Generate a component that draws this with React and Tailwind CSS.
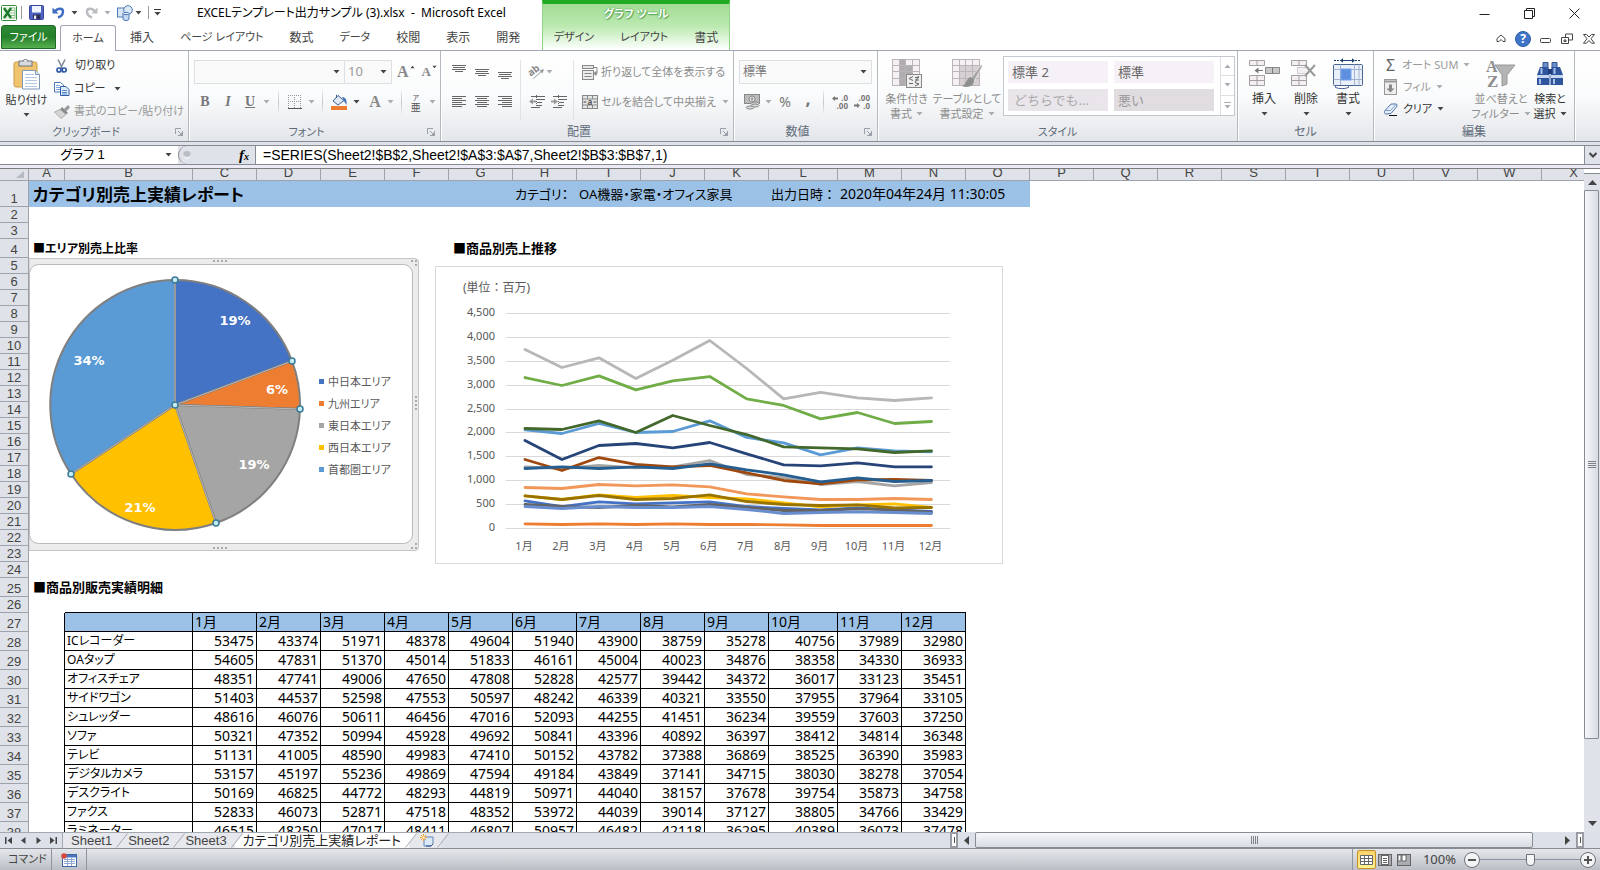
import React from "react";
import clsx from "clsx";

const MONTHS = ["1月", "2月", "3月", "4月", "5月", "6月", "7月", "8月", "9月", "10月", "11月", "12月"];

const COLUMNS = "ABCDEFGHIJKLMNOPQRSTUVWX".split("");

const PRODUCTS = [
    ["ICレコーダー", 53475, 43374, 51971, 48378, 49604, 51940, 43900, 38759, 35278, 40756, 37989, 32980],
    ["OAタップ", 54605, 47831, 51370, 45014, 51833, 46161, 45004, 40023, 34876, 38358, 34330, 36933],
    ["オフィスチェア", 48351, 47741, 49006, 47650, 47808, 52828, 42577, 39442, 34372, 36017, 33123, 35451],
    ["サイドワゴン", 51403, 44537, 52598, 47553, 50597, 48242, 46339, 40321, 33550, 37955, 37964, 33105],
    ["シュレッダー", 48616, 46076, 50611, 46456, 47016, 52093, 44255, 41451, 36234, 39559, 37603, 37250],
    ["ソファ", 50321, 47352, 50994, 45928, 49692, 50841, 43396, 40892, 36397, 38412, 34814, 36348],
    ["テレビ", 51131, 41005, 48590, 49983, 47410, 50152, 43782, 37388, 36869, 38525, 36390, 35983],
    ["デジタルカメラ", 53157, 45197, 55236, 49869, 47594, 49184, 43849, 37141, 34715, 38030, 38278, 37054],
    ["デスクライト", 50169, 46825, 44772, 48293, 44819, 50971, 44040, 38157, 37678, 39754, 35873, 34758],
    ["ファクス", 52833, 46073, 52871, 47518, 48352, 53972, 44039, 39014, 37127, 38805, 34766, 33429],
    ["ラミネーター", 46515, 48250, 47017, 48411, 46807, 50957, 46482, 42118, 36295, 40389, 36073, 37478]
];

const SERIES = [
    { color: "#4472c4", data: [579, 460, 558, 516, 537, 558, 460, 419, 391, 433, 391, 356] },
    { color: "#ed7d31", data: [98, 84, 98, 84, 98, 84, 84, 77, 63, 63, 63, 63] },
    { color: "#a5a5a5", data: [1291, 1256, 1319, 1270, 1291, 1423, 1130, 1067, 921, 984, 893, 963] },
    { color: "#ffc000", data: [684, 607, 705, 649, 691, 649, 621, 537, 454, 495, 516, 440] },
    { color: "#5b9bd5", data: [2065, 1988, 2198, 2009, 2030, 2254, 1905, 1793, 1542, 1688, 1626, 1605] },
    { color: "#70ad47", data: [3160, 2993, 3195, 2902, 3091, 3181, 2714, 2575, 2295, 2428, 2198, 2240] },
    { color: "#264478", data: [1842, 1444, 1737, 1779, 1688, 1800, 1563, 1333, 1312, 1374, 1291, 1291] },
    { color: "#9e480e", data: [1444, 1214, 1486, 1340, 1291, 1319, 1165, 1005, 935, 1019, 1026, 1005] },
    { color: "#636363", data: [502, 460, 440, 481, 454, 502, 440, 377, 377, 412, 391, 335] },
    { color: "#997300", data: [684, 607, 691, 607, 628, 705, 565, 502, 481, 495, 433, 440] },
    { color: "#255e91", data: [1256, 1291, 1256, 1291, 1256, 1354, 1228, 1123, 977, 1060, 984, 1005] },
    { color: "#43682b", data: [2093, 2072, 2254, 2009, 2365, 2156, 1967, 1709, 1688, 1668, 1591, 1626] },
    { color: "#698ed0", data: [460, 419, 460, 440, 440, 460, 398, 314, 335, 349, 335, 314] },
    { color: "#f1975a", data: [858, 837, 921, 893, 914, 872, 726, 663, 607, 607, 628, 607] },
    { color: "#b7b7b7", data: [3747, 3370, 3572, 3140, 3523, 3935, 3349, 2714, 2847, 2735, 2679, 2735] }
];

const AREAS = [
    { name: "中日本エリア", color: "#4472c4", from: [146, 22], to: [263, 103], label: "19%", at: [206, 67] },
    { name: "九州エリア", color: "#ed7d31", from: [263, 103], to: [271, 151], label: "6%", at: [248, 136] },
    { name: "東日本エリア", color: "#a5a5a5", from: [271, 151], to: [187, 265], label: "19%", at: [225, 211] },
    { name: "西日本エリア", color: "#ffc000", from: [187, 265], to: [42, 216], label: "21%", at: [111, 254] },
    { name: "首都圏エリア", color: "#5b9bd5", from: [42, 216], to: [146, 22], label: "34%", at: [60, 107] }
];

/* ---------- small parts ---------- */

const Arrow = ({ dim }) => (
    <svg width="7" height="4" viewBox="0 0 7 4" className="shrink-0" aria-hidden="true">
        <path d="M0.5 0h6L3.5 3.6z" fill={dim ? "#a9adb3" : "#444"} />
    </svg>
);

const ScrollArrow = ({ className }) => (
    <svg width="9" height="5" viewBox="0 0 9 5" className={clsx("shrink-0", className)} aria-hidden="true">
        <path d="M0 0h9L4.5 5z" fill="#444" />
    </svg>
);

const Divider = () => <span className="w-px h-6 shrink-0 bg-gradient-to-b from-[#eceef1] via-[#c3c8ce] to-[#eceef1]" />;

const IconButton = ({ label, children, className }) => (
    <button type="button" aria-label={label} className={clsx("flex items-center justify-center shrink-0", className)}>
        {children}
    </button>
);

const Group = ({ title, launcher, className, children }) => (
    <section className={clsx("flex flex-col shrink-0 border-r border-[#b4b8bf] shadow-[1px_0_0_#fff]", className)}>
        <div className="flex-1 min-h-0">{children}</div>
        <div className={clsx("relative h-[19px] text-center leading-5 text-[#5f6b7a]", launcher && "pr-4")}>
            {title}
            {launcher && (
                <button type="button" aria-label={title + "の設定"} className="absolute right-[5px] top-[6px]">
                    <svg width="8" height="8" viewBox="0 0 8 8" fill="none" stroke="#9aa0a8" className="block">
                        <path d="M0.5 6V0.5H6M3 3l3 3M7.5 3v4.5H3" />
                        <path d="M7.5 4.5v3h-3z" fill="#9aa0a8" />
                    </svg>
                </button>
            )}
        </div>
    </section>
);

const BigButton = ({ icon, lines, dim, className }) => (
    <button
        type="button"
        className={clsx("flex flex-col items-center shrink-0 whitespace-nowrap leading-[15px]", dim ? "text-[#8d8d8d]" : "text-[#333]", className)}
    >
        <span className="h-[34px] flex items-center">{icon}</span>
        <span className="mt-px">{lines[0]}</span>
        <span className="flex items-center justify-center gap-1 h-[15px]">
            {lines[1]}
            <Arrow dim={dim} />
        </span>
    </button>
);

const Lines = ({ y = 0, rows, shift = 0.5, step = 3 }) => (
    <svg width="14" height="14" viewBox="0 0 14 14" aria-hidden="true">
        {rows.map((w, i) => (
            <rect key={i} x={(14 - w) * shift} y={y + i * step} width={w} height="1" fill="#666" />
        ))}
    </svg>
);

/* ---------- icons ---------- */

const ExcelIcon = () => (
    <svg width="16" height="16" viewBox="0 0 16 16" aria-hidden="true">
        <rect x="0.5" y="0.5" width="15" height="15" rx="1" fill="#fff" stroke="#2f8a3a" />
        <rect x="2" y="2" width="12" height="12" fill="#e2f2df" />
        <path d="M9 3h5v10H9" fill="#fff" stroke="#6cb56b" strokeWidth="0.8" />
        <path d="M9 5.5h5M9 8h5M9 10.5h5" stroke="#6cb56b" strokeWidth="0.8" />
        <path d="M3 3l7 10M10 3L3 13" stroke="#1d7a2c" strokeWidth="2.4" />
    </svg>
);

const SaveIcon = () => (
    <svg width="15" height="15" viewBox="0 0 15 15" aria-hidden="true">
        <rect x="0.5" y="0.5" width="14" height="14" rx="1" fill="#4f63c2" stroke="#3a4699" />
        <rect x="3" y="1" width="9" height="6.5" fill="#eef3fd" />
        <rect x="4" y="9.5" width="7.5" height="4.5" fill="#2b2f55" />
        <rect x="5" y="10.5" width="2.2" height="3.5" fill="#e6e9f7" />
    </svg>
);

const UndoIcon = ({ flip, color }) => (
    <svg width="13" height="13" viewBox="0 0 13 13" fill="none" className={flip ? "-scale-x-100" : ""} aria-hidden="true">
        <path d="M3 5.5C6 1.5 11 2 11 5.5c0 3-2 5-5 6" stroke={color} strokeWidth="2.4" />
        <path d="M0.5 1.5v6h6z" fill={color} />
    </svg>
);

const ShapesIcon = () => (
    <svg width="16" height="16" viewBox="0 0 16 16" aria-hidden="true">
        <rect x="0.5" y="3" width="9" height="9" fill="#d9e6f6" stroke="#4a78b5" />
        <circle cx="11" cy="5" r="4.3" fill="#dfeaf8" stroke="#4a78b5" />
        <path d="M6 8.5V14c0 2 6 2 6 0V8.5" fill="#c5d9f0" stroke="#4a78b5" />
        <ellipse cx="9" cy="8.5" rx="3" ry="1.2" fill="#eef5fd" stroke="#4a78b5" />
    </svg>
);

const PasteIcon = () => (
    <svg width="28" height="31" viewBox="0 0 28 31" aria-hidden="true">
        <rect x="1" y="3" width="23" height="25" rx="2" fill="#f0c46f" stroke="#c99b45" />
        <rect x="6" y="2" width="13" height="5" fill="#d8dadd" stroke="#71757a" />
        <path d="M10 2.5a2.5 2 0 0 1 5 0" fill="#fff" stroke="#71757a" />
        <path d="M9.5 11.5h13l4 4v14.5h-17z" fill="#fff" stroke="#7f99bd" />
        <path d="M22.5 11.5v4h4" fill="#dce7f5" stroke="#7f99bd" />
        <path d="M12 15.5h9M12 18.5h12M12 21.5h12M12 24.5h12M12 27.5h12" stroke="#b5cae4" />
    </svg>
);

const CutIcon = () => (
    <svg width="11" height="14" viewBox="0 0 11 14" fill="none" aria-hidden="true">
        <path d="M2 0.5l4.5 9M9 0.5l-4.5 9" stroke="#7c8797" strokeWidth="1.5" />
        <circle cx="3" cy="11" r="2" stroke="#2d57a6" strokeWidth="1.7" />
        <circle cx="8.2" cy="11" r="2" stroke="#2d57a6" strokeWidth="1.7" />
    </svg>
);

const CopyIcon = () => (
    <svg width="16" height="14" viewBox="0 0 16 14" aria-hidden="true">
        <path d="M0.5 0.5h6l3 2.5v7h-9z" fill="#fff" stroke="#4b77b8" />
        <path d="M2 3.5h4M2 5.5h5M2 7.5h5" stroke="#7ea3d8" />
        <path d="M6.5 4.5H12l3 3v6H6.5z" fill="#dfeafa" stroke="#305fa8" />
        <path d="M8 8.5h5M8 10.5h5M8 12h5" stroke="#5c8ccc" />
    </svg>
);

const BrushIcon = () => (
    <svg width="16" height="14" viewBox="0 0 16 14" aria-hidden="true">
        <path d="M10 4l4-4 2 2.5-4 4z" fill="#9b9b9b" />
        <path d="M8 2l6 6-2 1.5-6-5z" fill="#888" />
        <path d="M6 4.5L0.5 7l6.5 6.5L12 9.500z" fill="#d5d5d5" stroke="#ababab" />
    </svg>
);

const BorderIcon = () => (
    <svg width="14" height="14" viewBox="0 0 14 14" fill="none" stroke="#999" aria-hidden="true">
        <path d="M0.5 0v13M6.5 0v13M12.5 0v13M0 0.5h14M0 6.5h14" strokeDasharray="1 1" />
        <path d="M0 13.5h14" stroke="#555" />
    </svg>
);

const FillIcon = () => (
    <svg width="17" height="16" viewBox="0 0 17 16" aria-hidden="true">
        <path d="M7 1.5l6 5-6 4.5-5-4z" fill="#dfe9f6" stroke="#40608f" />
        <path d="M5.5 4V0.8" stroke="#40608f" />
        <path d="M11 3c4 0 5 4 4.500 8l-2.500-4z" fill="#3f6fb5" />
        <rect x="0" y="12" width="16" height="4" fill="#ed7d31" />
    </svg>
);

const OrientationIcon = () => (
    <svg width="16" height="14" viewBox="0 0 16 14" className="overflow-visible" aria-hidden="true">
        <text x="0" y="9" fontSize="10" fontWeight="700" fill="#888" transform="rotate(-38 5 8)">ab</text>
        <path d="M4.5 13.5L13 6" stroke="#999" />
        <path d="M15 4l-4.5 1.5 3 3z" fill="#999" />
    </svg>
);

const IndentIcon = ({ out }) => (
    <svg width="16" height="14" viewBox="0 0 16 14" aria-hidden="true">
        <path d="M2 1.5h14M8 4.5h8M8 7.5h5M8 10.5h5M2 12.5h9" stroke="#666" />
        <path d="M7.5 0v14" stroke="#666" strokeDasharray="1 1" />
        {out ? <path d="M0 6.5l4-3v2h3v2H4v2z" fill="#999" /> : <path d="M7 6.5l-4-3v2H0v2h3v2z" fill="#999" />}
    </svg>
);

const WrapIcon = () => (
    <svg width="16" height="15" viewBox="0 0 16 15" fill="none" stroke="#888" aria-hidden="true">
        <rect x="0.5" y="0.5" width="11" height="3" fill="#e6e6e6" />
        <rect x="0.5" y="5.5" width="11" height="9" fill="#ececec" />
        <path d="M2.5 8.5h7M2.5 11.5h7M12 2.5h3v6h-2" />
        <path d="M14 6.5v4l-2-2z" fill="#888" />
    </svg>
);

const MergeIcon = () => (
    <svg width="16" height="14" viewBox="0 0 16 14" fill="none" stroke="#888" aria-hidden="true">
        <rect x="0.5" y="0.5" width="15" height="13" fill="#e6e6e6" />
        <path d="M0 4h16M0 10h16M5.5 0v4M10.5 0v4M5.5 10v4M10.5 10v4" />
        <path d="M1.5 7h3M11.5 7h3" stroke="#444" />
        <text x="5.5" y="9.5" fontSize="8" fontWeight="700" fill="#555" stroke="none">a</text>
    </svg>
);

const CurrencyIcon = () => (
    <svg width="17" height="16" viewBox="0 0 17 16" aria-hidden="true">
        <rect x="0.5" y="0.5" width="15" height="9" fill="#bbb" stroke="#888" />
        <ellipse cx="8" cy="5" rx="3" ry="3" fill="#eee" stroke="#888" />
        <path d="M8 3v4M6.5 5h3" stroke="#888" />
        <ellipse cx="11" cy="9.5" rx="4" ry="1.5" fill="#ddd" stroke="#888" />
        <ellipse cx="11" cy="11.5" rx="4" ry="1.5" fill="#ddd" stroke="#888" />
        <ellipse cx="6" cy="13.5" rx="4" ry="1.5" fill="#ddd" stroke="#888" />
    </svg>
);

const DecimalIcon = ({ more }) => (
    <svg width="16" height="14" viewBox="0 0 16 14" fontSize="8" fontWeight="700" fill="#777" className="overflow-visible" aria-hidden="true">
        <text x="16" y="6" textAnchor="end">{more ? ".0" : ".00"}</text>
        <text x="16" y="14" textAnchor="end">{more ? ".00" : ".0"}</text>
        {more ? <path d="M0 3.5l3-2.500v1.500h3v2H3V6z" /> : <path d="M6 10.5L3 8v1.500H0v2h3V13z" />}
    </svg>
);

const GridBase = ({ shaded }) => (
    <>
        <rect x="0.5" y="0.5" width="27" height="26" fill="#f5f0f3" stroke="#bbb5b9" />
        {shaded ? <path d="M7 0h6v27H7zM13 7h7v12h-7z" fill="#b0adb0" /> : <rect x="7" y="7" width="20" height="19" fill="#d6d0d4" />}
        <path d="M7.5 0v27M13.5 0v27M20.5 0v27M0 6.5h28M0 12.5h28M0 19.5h28" stroke="#bbb5b9" />
    </>
);

const ConditionalIcon = () => (
    <svg width="30" height="29" viewBox="0 0 30 29" aria-hidden="true">
        <GridBase shaded />
        <rect x="14.5" y="15.5" width="15" height="13" fill="#eee" stroke="#888" />
        <path d="M21 17.5l-4 2 4 2M17 24.5h4M23 18.500h4M23 21h4M26.500 17l-3 6M23 23.500l4 1.500-4 2" stroke="#666" fill="none" />
    </svg>
);

const TableFormatIcon = () => (
    <svg width="31" height="29" viewBox="0 0 31 29" aria-hidden="true">
        <GridBase />
        <path d="M30 5L19 19l3 3 8-14z" fill="#a5a5a5" stroke="#fff" strokeWidth="0.5" />
        <path d="M19 18c-5 1-4 7-9 9 5 2 12 1 12-6z" fill="#8e8e8e" />
    </svg>
);

const InsertIcon = ({ remove }) => (
    <svg width="31" height="29" viewBox="0 0 31 29" fill="#f4eff2" stroke="#a2a0a2" aria-hidden="true">
        <path d="M0.5 1.5h15v5h-15zM8 1.5v5M0.5 16.5h15v10h-15zM8 16.5v10M0.5 21.5h15" />
        {remove ? (
            <>
                <path d="M6.5 8.5h11v6h-11z" strokeDasharray="1 1" />
                <path d="M14 6l10 11M24 6L14 17" stroke="#999" strokeWidth="2" fill="none" />
            </>
        ) : (
            <>
                <path d="M16.5 8.5h14v6h-14z" fill="#c9c6c8" stroke="#888" />
                <path d="M23.5 8.5v6M7 11.5h7" stroke="#777" />
                <path d="M5.5 11.5l4-3v6z" fill="#777" stroke="none" />
            </>
        )}
    </svg>
);

const FormatIcon = () => (
    <svg width="31" height="31" viewBox="0 0 31 31" aria-hidden="true">
        <path d="M1 2.5h27" stroke="#1f3f75" strokeDasharray="2 1" />
        <path d="M8 2.5h13" stroke="#1f3f75" />
        <path d="M7 2.5l3-2.300v4.600zM22 2.5l-3-2.300v4.600z" fill="#1f3f75" />
        <rect x="0.5" y="6.5" width="29" height="21" rx="1" fill="#eaf0f9" stroke="#4a6492" />
        <path d="M7.5 6.5v21M21.5 6.5v21M0.5 11.5h29M0.5 21.5h29M26 6.5v21" stroke="#a1b3cf" />
        <rect x="8" y="11" width="10" height="11" fill="#5f8fe0" stroke="#7ba3e8" />
        <path d="M2.5 27.5h13v2c-4 1.500-9 1.500-13 0z" fill="#fff" stroke="#4a6492" />
    </svg>
);

const FillDownIcon = () => (
    <svg width="14" height="16" viewBox="0 0 14 16" aria-hidden="true">
        <rect x="0.5" y="0.5" width="12" height="15" fill="#eee" stroke="#999" />
        <path d="M1 2.5h11" stroke="#999" strokeWidth="2" />
        <path d="M5 5.5h3v4h2.500l-4 4-4-4H5z" fill="#888" />
    </svg>
);

const EraserIcon = () => (
    <svg width="14" height="13" viewBox="0 0 14 13" aria-hidden="true">
        <path d="M7 1h5c1.500 0 1 2 0.500 3L7 10.500 1.500 11C0 10.500 0.500 8.500 1 7.500z" fill="#e6eefa" stroke="#4f73a8" />
        <path d="M1 7.500h5.500L12 1.500" fill="none" stroke="#7f9cc8" />
        <path d="M5 12.5h8" stroke="#111" />
    </svg>
);

const SortIcon = () => (
    <svg width="30" height="29" viewBox="0 0 30 29" className="overflow-visible" aria-hidden="true">
        <path d="M9 6h20l-8 10v9l-5 2V16z" fill="#b4b4b4" stroke="#999" />
        <text x="0" y="13" fontSize="16" fontWeight="700" fill="#8e8e8e" className="font-['Liberation_Serif',serif]">A</text>
        <text x="1" y="28" fontSize="17" fontWeight="700" fill="#8e8e8e" className="font-['Liberation_Serif',serif]">Z</text>
    </svg>
);

const FindIcon = () => (
    <svg width="28" height="27" viewBox="0 0 28 27" aria-hidden="true">
        <path d="M7 2.5h5v5H7zM16 2.5h5v5h-5z" fill="#6d8fc9" stroke="#35558f" />
        <path d="M4 7h8.500l1 9v9H1V15zM24 7h-8.500l-1 9v9H27V15z" fill="#2f559c" />
        <path d="M1 15h12v3H1zM15 15h12v3H15z" fill="#c7d7f0" />
        <path d="M5.5 8v6M18.5 8v6M4 19v5M18 19v5" stroke="#a9c1ea" strokeWidth="2" />
        <rect x="12" y="9" width="4" height="5" fill="#1f3d78" />
    </svg>
);

/* ---------- title bar and tabs ---------- */

const TABS = ["挿入", "ページ レイアウト", "数式", "データ", "校閲", "表示", "開発"];

const isKana = (text) => /[ァ-ヶ]/.test(text);

const Header = () => (
    <header className="flex h-[51px] shrink-0 border-b border-[#a0a6b4] text-[#444]">
        <div className="w-[542px] shrink-0 flex flex-col">
            <div className="h-[25px] flex items-center text-black">
                <div className="w-[197px] shrink-0 flex items-center pl-[1px]">
                    <ExcelIcon />
                    <span className="w-px h-[13px] bg-[#999] mx-1" />
                    <IconButton label="上書き保存" className="ml-[3px]"><SaveIcon /></IconButton>
                    <IconButton label="元に戻す" className="ml-2 gap-[6px]"><UndoIcon color="#3f6cc4" /><Arrow /></IconButton>
                    <IconButton label="やり直し" className="ml-[7px] gap-[6px]"><UndoIcon color="#b9bcc1" flip /><Arrow dim /></IconButton>
                    <IconButton label="図形" className="ml-[6px] gap-[2px]"><ShapesIcon /><Arrow /></IconButton>
                    <span className="w-px h-[13px] bg-[#999] ml-[6px] mr-[5px]" />
                    <IconButton label="クイック アクセス ツール バーのユーザー設定" className="flex-col gap-[2px]">
                        <span className="w-[7px] h-px bg-[#333]" />
                        <Arrow />
                    </IconButton>
                </div>
                <h1 className="text-xs whitespace-nowrap">EXCELテンプレート出力サンプル (3).xlsx&nbsp; -&nbsp; Microsoft Excel</h1>
            </div>
            <nav className="flex-1 flex items-stretch pl-[1px]">
                <button type="button" className="w-[55px] shrink-0 mb-px rounded-t-[3px] border border-[#1d6b24] bg-gradient-to-b from-[#2d8a34] via-[#25802b] to-[#57b04e] text-[11px] text-white">ファイル</button>
                <button type="button" className="w-[56px] shrink-0 ml-1 mr-px -mb-px rounded-t-[3px] border border-b-0 border-[#a0a6b4] bg-white text-[11px]">ホーム</button>
                {TABS.map((tab) => (
                    <button key={tab} type="button" className={clsx("px-[13px] shrink-0 whitespace-nowrap", isKana(tab) && "text-[11px]")}>{tab}</button>
                ))}
            </nav>
        </div>
        <div className="w-[188px] shrink-0 flex flex-col border-t-4 border-x border-t-[#22ab22] border-x-[#8fd585] bg-gradient-to-b from-[#a3dc96] via-[#bdeab2] to-white">
            <div className="h-[21px] text-center text-[11px] leading-[20px] font-bold text-white [text-shadow:0_0_2px_#3c8f3c,1px_1px_1px_#5fae5f]">グラフ ツール</div>
            <nav className="flex-1 flex items-stretch justify-center">
                {["デザイン", "レイアウト", "書式"].map((tab) => (
                    <button key={tab} type="button" className={clsx("px-[13px] whitespace-nowrap", isKana(tab) && "text-[11px]")}>{tab}</button>
                ))}
            </nav>
        </div>
        <div className="flex-1 flex flex-col items-end text-[#222]">
            <div className="h-[27px] flex items-center gap-[34px] pr-[20px]">
                <IconButton label="最小化"><svg width="11" height="11"><path d="M0.5 6.5h10" stroke="currentColor" /></svg></IconButton>
                <IconButton label="元に戻す (縮小)">
                    <svg width="11" height="11" fill="none" stroke="currentColor"><path d="M0.5 2.5h8v8h-8zM2.5 2.5v-2h8v8h-2" /></svg>
                </IconButton>
                <IconButton label="閉じる"><svg width="11" height="11" stroke="currentColor"><path d="M0.5 0.5l10 10M10.5 0.5l-10 10" /></svg></IconButton>
            </div>
            <div className="flex-1 flex items-center gap-[9px] pr-[5px]">
                <IconButton label="リボンの最小化">
                    <svg width="10" height="9" fill="none" stroke="#444"><path d="M5 1L9 4.500V7.500H7L5 5.500 3 7.500H1V4.500z" /></svg>
                </IconButton>
                <IconButton label="ヘルプ" className="size-4 rounded-full bg-[#3f74c6] border border-[#2f5ca6] text-white font-bold leading-none">?</IconButton>
                <IconButton label="ウィンドウの最小化"><svg width="12" height="12" fill="none" stroke="#444"><rect x="0.5" y="5.5" width="10" height="4" rx="1" /></svg></IconButton>
                <IconButton label="ウィンドウを元に戻す">
                    <svg width="13" height="12" fill="none" stroke="#444"><path d="M0.5 4.5h7v6h-7zM3 7h2v1.500H3zM4.500 4V1h7v6h-4" /></svg>
                </IconButton>
                <IconButton label="ウィンドウを閉じる">
                    <svg width="12" height="10" fill="none" stroke="#444"><path d="M0.5 0.5h3L6 3l2.500-2.500h3L8 4.700l3.500 4.500h-3L6 6.500 3.500 9.200h-3L4 4.700z" /></svg>
                </IconButton>
            </div>
        </div>
    </header>
);

/* ---------- ribbon ---------- */

const ClipboardGroup = () => (
    <Group title="クリップボード" launcher className="w-[189px] text-[11px]">
        <div className="flex pt-[5px]">
            <BigButton icon={<PasteIcon />} lines={["貼り付け", ""]} className="w-[53px] pt-px" />
            <div className="flex flex-col whitespace-nowrap text-[#333]">
                <button type="button" className="h-[23px] flex items-center gap-2 pl-[3px] -mt-[2px]"><CutIcon />切り取り</button>
                <button type="button" className="h-[23px] flex items-center gap-1 pl-px"><CopyIcon />コピー<span className="pl-1"><Arrow /></span></button>
                <button type="button" className="h-[23px] flex items-center gap-1 pl-px text-[#999]"><BrushIcon />書式のコピー/貼り付け</button>
            </div>
        </div>
    </Group>
);

const FontGroup = () => (
    <Group title="フォント" launcher className="w-[252px] text-[11px]">
        <div className="flex items-center pt-[9px] pl-[5px]">
            <div className="flex items-center w-[151px] h-[24px] border border-[#dcdfe4] bg-[#fafafb]">
                <input aria-label="フォント名" className="min-w-0 flex-1 bg-transparent px-1" />
                <span className="px-1"><Arrow /></span>
            </div>
            <div className="flex items-center w-[48px] h-[24px] -ml-px border border-[#dcdfe4] bg-[#fafafb]">
                <input aria-label="フォント サイズ" defaultValue="10" className="min-w-0 flex-1 bg-transparent pl-[3px] text-[13px] text-[#999]" />
                <span className="px-1"><Arrow /></span>
            </div>
            <IconButton label="フォントの拡大" className="ml-[5px] items-start text-[#888] font-bold font-['Liberation_Serif',serif] text-base leading-6">
                A<span className="mt-[5px] rotate-180 scale-75"><Arrow /></span>
            </IconButton>
            <IconButton label="フォントの縮小" className="ml-[6px] items-start text-[#888] font-bold font-['Liberation_Serif',serif] text-[13px] leading-6">
                A<span className="mt-[5px] scale-75"><Arrow /></span>
            </IconButton>
        </div>
        <div className="flex items-center h-[24px] mt-[6px] pl-[10px] text-[#777] font-['Liberation_Serif',serif] text-sm font-bold">
            <IconButton label="太字" className="w-3">B</IconButton>
            <IconButton label="斜体" className="w-3 ml-[11px] italic">I</IconButton>
            <IconButton label="下線" className="ml-[11px] gap-2"><span className="underline">U</span><Arrow dim /></IconButton>
            <span className="w-2" /><Divider />
            <IconButton label="罫線" className="ml-[9px] gap-[6px]"><BorderIcon /><Arrow dim /></IconButton>
            <span className="w-[7px]" /><Divider />
            <IconButton label="塗りつぶしの色" className="ml-[8px] gap-[5px]"><FillIcon /><Arrow /></IconButton>
            <IconButton label="フォントの色" className="ml-[9px] gap-[6px] text-base text-[#888]"><span>A</span><Arrow dim /></IconButton>
            <span className="w-[7px]" /><Divider />
            <IconButton label="ふりがな" className="ml-[9px] gap-[8px]">
                <span className="flex flex-col items-center font-['Noto_Sans_CJK_JP',sans-serif] font-normal text-[#555]">
                    <span className="text-[7px] leading-[8px]">ア</span>
                    <span className="text-[10px] leading-[11px]">亜</span>
                </span>
                <Arrow dim />
            </IconButton>
        </div>
    </Group>
);

const AlignGroup = () => (
    <Group title="配置" launcher className="w-[293px]">
        <div className="flex pt-[9px] pl-[6px]">
            <div className="shrink-0 grid grid-cols-[23px_23px_23px] grid-rows-[24px_36px] items-center">
                <IconButton label="上揃え"><Lines rows={[14, 12, 14, 8]} step={2} /></IconButton>
                <IconButton label="上下中央揃え"><Lines rows={[14, 12, 14, 8]} step={2} y={4} /></IconButton>
                <IconButton label="下揃え"><Lines rows={[14, 12, 14, 8]} step={2} y={7} /></IconButton>
                <IconButton label="左揃え"><Lines rows={[14, 10, 14, 10, 14, 10]} step={2} shift={0} y={1} /></IconButton>
                <IconButton label="中央揃え"><Lines rows={[14, 10, 14, 10, 14, 10]} step={2} y={1} /></IconButton>
                <IconButton label="右揃え"><Lines rows={[14, 10, 14, 10, 14, 10]} step={2} shift={1} y={1} /></IconButton>
            </div>
            <div className="w-[54px] shrink-0 flex flex-col border-x border-[#dfe2e6] pl-2 ml-1">
                <div className="h-[24px] flex items-center"><IconButton label="方向" className="gap-px"><OrientationIcon /><Arrow dim /></IconButton></div>
                <div className="h-[36px] flex items-center gap-[6px]">
                    <IconButton label="インデントを減らす"><IndentIcon out /></IconButton>
                    <IconButton label="インデントを増やす"><IndentIcon /></IconButton>
                </div>
            </div>
            <div className="flex flex-col pl-2 text-[11px] text-[#8d8d8d] whitespace-nowrap">
                <button type="button" className="h-[24px] flex items-center gap-[3px]"><WrapIcon />折り返して全体を表示する</button>
                <button type="button" className="h-[36px] flex items-center gap-[3px]"><MergeIcon />セルを結合して中央揃え<span className="pl-[3px]"><Arrow dim /></span></button>
            </div>
        </div>
    </Group>
);

const NumberGroup = () => (
    <Group title="数値" launcher className="w-[144px]">
        <div className="px-[5px] pt-[9px]">
            <div className="relative h-[24px] border border-[#dcdfe4] bg-[#fafafb] flex items-center">
                <select aria-label="表示形式" className="appearance-none w-full bg-transparent pl-[3px] text-[#777]">
                    <option>標準</option>
                </select>
                <span className="absolute right-1 pointer-events-none"><Arrow /></span>
            </div>
        </div>
        <div className="flex items-center h-[24px] mt-[6px] pl-[10px] text-[#777]">
            <IconButton label="通貨表示形式" className="gap-1"><CurrencyIcon /><Arrow dim /></IconButton>
            <IconButton label="パーセント スタイル" className="w-4 ml-[5px] text-sm">%</IconButton>
            <IconButton label="桁区切りスタイル" className="w-3 ml-[9px] h-full items-start font-bold text-lg leading-4">,</IconButton>
            <span className="w-[9px]" /><Divider />
            <IconButton label="小数点以下の表示桁数を増やす" className="ml-2"><DecimalIcon more /></IconButton>
            <IconButton label="小数点以下の表示桁数を減らす" className="ml-[6px]"><DecimalIcon /></IconButton>
        </div>
    </Group>
);

const StyleGroup = () => (
    <Group title="スタイル" className="w-[360px] text-[11px]">
        <div className="flex pt-[5px]">
            <BigButton dim icon={<ConditionalIcon />} lines={["条件付き", "書式"]} className="w-[57px]" />
            <BigButton dim icon={<TableFormatIcon />} lines={["テーブルとして", "書式設定"]} className="w-[64px]" />
            <div className="flex ml-1 h-[60px] border border-[#c5c8ce] bg-white text-[13px] text-[#666] [font-feature-settings:normal]">
                <div className="grid grid-cols-[100px_100px] grid-rows-2 gap-[6px] p-1 pr-[6px]">
                    <button type="button" className="bg-[#f5f1f7] text-left px-1 leading-none [font-feature-settings:normal]">標準 2</button>
                    <button type="button" className="bg-[#f5f1f7] text-left px-1 leading-none [font-feature-settings:normal]">標準</button>
                    <button type="button" className="bg-[#e9e5ea] text-left px-[6px] leading-none text-[#aaa] [font-feature-settings:normal]">どちらでも...</button>
                    <button type="button" className="bg-[#e0dce0] text-left px-1 leading-none text-[#999] [font-feature-settings:normal]">悪い</button>
                </div>
                <div className="w-[14px] grid grid-rows-3 border-l border-[#dcdfe4] divide-y divide-[#dcdfe4]">
                    <IconButton label="前の行"><span className="rotate-180 flex"><Arrow dim /></span></IconButton>
                    <IconButton label="次の行"><Arrow dim /></IconButton>
                    <IconButton label="その他" className="flex-col gap-[2px]"><span className="w-[7px] h-px bg-[#a9adb3]" /><Arrow dim /></IconButton>
                </div>
            </div>
        </div>
    </Group>
);

const CellGroup = () => (
    <Group title="セル" className="w-[136px]">
        <div className="flex pt-[5px] pl-[5px]">
            <BigButton icon={<InsertIcon />} lines={["挿入", ""]} className="w-[42px]" />
            <BigButton icon={<InsertIcon remove />} lines={["削除", ""]} className="w-[42px]" />
            <BigButton icon={<FormatIcon />} lines={["書式", ""]} className="w-[42px]" />
        </div>
    </Group>
);

const EditGroup = () => (
    <Group title="編集" className="w-[201px]">
        <div className="flex pt-[3px] pl-[10px] text-[11px]">
            <div className="w-[90px] shrink-0 flex flex-col whitespace-nowrap text-[#999]">
                <button type="button" className="h-[22px] flex items-center gap-[5px]"><span className="w-[13px] text-base leading-none text-[#666]">Σ</span>オート SUM<Arrow dim /></button>
                <button type="button" className="h-[22px] flex items-center gap-[5px]"><FillDownIcon />フィル<Arrow dim /></button>
                <button type="button" className="h-[22px] flex items-center gap-[5px] text-[#333]"><EraserIcon />クリア<Arrow /></button>
            </div>
            <BigButton dim icon={<SortIcon />} lines={["並べ替えと", "フィルター"]} className="w-[54px] pt-[2px]" />
            <BigButton icon={<FindIcon />} lines={["検索と", "選択"]} className="w-[44px] pt-[2px]" />
        </div>
    </Group>
);

const Ribbon = () => (
    <div className="flex h-[91px] shrink-0 overflow-hidden border-b border-[#868b94] bg-gradient-to-b from-white via-[#fafbfc] to-[#e3e6ea]">
        <ClipboardGroup />
        <FontGroup />
        <AlignGroup />
        <NumberGroup />
        <StyleGroup />
        <CellGroup />
        <EditGroup />
    </div>
);

const FormulaBar = () => (
    <div className="shrink-0 bg-[#dfe2e8] pt-[3px]">
        <div className="flex h-[20px] border-y border-[#868b94] bg-[#dfe2e8] font-['Liberation_Sans','Noto_Sans_CJK_JP',sans-serif] text-black">
            <div className="w-[178px] flex items-center bg-white">
                <input aria-label="名前ボックス" defaultValue="グラフ 1" className="min-w-0 flex-1 text-center text-[13px] leading-4" />
                <span className="pr-[6px]"><Arrow /></span>
            </div>
            <div className="w-[77px] flex items-center justify-between pr-[6px] rounded-l-full border-l border-[#868b94] bg-[#dfe2e8]">
                <span className="size-2 ml-1 rounded-full bg-[#b9bdc4] shadow-[inset_0_-2px_1px_#f3f4f6]" />
                <button type="button" aria-label="関数の挿入" className="italic font-bold font-['Liberation_Serif',serif] text-[15px] leading-none">f<span className="text-[10px]">x</span></button>
            </div>
            <input
                aria-label="数式バー"
                defaultValue="=SERIES(Sheet2!$B$2,Sheet2!$A$3:$A$7,Sheet2!$B$3:$B$7,1)"
                className="flex-1 min-w-0 border-l border-[#868b94] bg-white pl-[7px] text-[14px] leading-4"
            />
            <IconButton label="数式バーの展開" className="w-4 border-l border-[#868b94]">
                <svg width="8" height="6" fill="none" stroke="#444" strokeWidth="2"><path d="M0.5 1l3.5 3.500L7.5 1" /></svg>
            </IconButton>
        </div>
        <div className="h-1 bg-[#eceaf5] border-b border-[#7d7d7d]" />
    </div>
);

/* ---------- charts ---------- */

const Handle = ({ at }) => <circle cx={at[0]} cy={at[1]} r="3" fill="#c4ecf2" stroke="#3c7a99" strokeWidth="1.5" />;

const Grip = ({ x, y, vertical }) => (
    <g fill="#a9a9a9">
        {[0, 4, 8, 12].map((d) => (
            <rect key={d} x={vertical ? x : x + d} y={vertical ? y + d : y} width="2" height="2" />
        ))}
    </g>
);

const PieChart = () => (
    <svg width="390" height="293" viewBox="0 0 390 293" className="absolute left-[29px] top-[89px]" role="img" aria-label="エリア別売上比率">
        <path d="M0 0.5h386q3.500 0 3.500 3.500v285q0 3.500-3.500 3.500H0z" fill="#ececec" stroke="#c6c6c6" />
        <rect x="0.5" y="6.5" width="383" height="279" rx="9" fill="#fff" stroke="#b9b9b9" />
        <Grip x={184} y={2} />
        <Grip x={184} y={289} />
        <Grip x={386} y={138} vertical />
        <path d="M382 2h2v2h-2zM386 2h2v2h-2zM386 6h2v2h-2zM382 289h2v2h-2zM386 289h2v2h-2zM386 285h2v2h-2z" fill="#a9a9a9" />
        {AREAS.map((a) => (
            <path
                key={a.name}
                d={`M146 147L${a.from.join(" ")}A125 125 0 0 1 ${a.to.join(" ")}Z`}
                fill={a.color}
                stroke="#7f7f7f"
                strokeWidth="2"
            />
        ))}
        {AREAS.map((a) => (
            <path key={a.name} d={`M146 147L${a.from.join(" ")}`} stroke="#d0d0d0" strokeWidth="0.7" />
        ))}
        {AREAS.map((a) => <Handle key={a.name} at={a.from} />)}
        <Handle at={[146, 147]} />
        {AREAS.map((a, i) => (
            <g key={a.name}>
                <text x={a.at[0]} y={a.at[1]} textAnchor="middle" fontSize="13" fontWeight="700" fill="#fff" className="font-['DejaVu_Sans',sans-serif]">{a.label}</text>
                <rect x="290" y={121 + i * 22} width="5" height="5" fill={a.color} />
                <text x="299" y={128 + i * 22} fontSize="11" fill="#595959">{a.name}</text>
            </g>
        ))}
    </svg>
);

const LineChart = () => {
    const x = (i) => 90 + i * 36.95;
    const y = (v) => 262.5 - (v / 4500) * 215;
    return (
        <svg width="568" height="298" viewBox="0 0 568 298" className="absolute left-[435px] top-[97px]" role="img" aria-label="商品別売上推移">
            <rect x="0.5" y="0.5" width="567" height="297" fill="#fff" stroke="#d9d9d9" />
            <text x="28" y="26" fontSize="12" fill="#595959" className="[font-feature-settings:normal]">(単位：百万)</text>
            {[0, 500, 1000, 1500, 2000, 2500, 3000, 3500, 4000, 4500].map((v) => (
                <g key={v}>
                    <path d={`M71 ${Math.floor(y(v)) + 0.5}H515`} stroke="#d9d9d9" />
                    <text x="60" y={Math.floor(y(v)) + 3} textAnchor="end" fontSize="11" fill="#595959">{v.toLocaleString("en-US")}</text>
                </g>
            ))}
            {SERIES.map((s) => (
                <polyline
                    key={s.color}
                    points={s.data.map((v, i) => `${x(i)},${y(v)}`).join(" ")}
                    fill="none"
                    stroke={s.color}
                    strokeWidth="2.8"
                    strokeLinecap="round"
                    strokeLinejoin="round"
                />
            ))}
            {MONTHS.map((m, i) => (
                <text key={m} x={x(i) - 1} y="284" textAnchor="middle" fontSize="11" fill="#595959">{m}</text>
            ))}
        </svg>
    );
};

/* ---------- sheet ---------- */

const RowHead = ({ n }) => (
    <th
        scope="row"
        className="border-r border-b border-[#9ea3ab] bg-[#dfe2e8] align-bottom text-center font-normal text-[13px] leading-[15px] text-[#444] font-['Liberation_Sans',sans-serif]"
    >
        {n}
    </th>
);

const EmptyRows = ({ from, to }) =>
    Array.from({ length: to - from + 1 }, (_, i) => (
        <tr key={from + i} className="h-4">
            <RowHead n={from + i} />
        </tr>
    ));

const Sheet = () => (
    <div className="relative flex-1 min-w-0 overflow-hidden bg-white">
        <table className="w-[1606px] table-fixed border-separate border-spacing-0 text-black [&_td]:p-0 [&_th]:p-0">
            <colgroup>
                <col className="w-[29px]" />
                {COLUMNS.map((c) => (
                    <col key={c} className={c === "A" ? "w-[36px]" : c === "B" ? "w-[128px]" : c === "L" ? "w-[69px]" : "w-[64px]"} />
                ))}
            </colgroup>
            <thead>
                <tr className="h-3 bg-[#dfe2e8]">
                    <td className="border-r border-b border-[#9ea3ab]">
                        <svg width="8" height="7" className="ml-auto mr-1 block"><path d="M8 0v7H0z" fill="#b5b9c0" /></svg>
                    </td>
                    {COLUMNS.map((c) => (
                        <th key={c} scope="col" className="border-r border-b border-[#9ea3ab] font-normal text-[13px] text-[#444] font-['Liberation_Sans',sans-serif]">
                            <span className="block h-[11px] leading-[8px] overflow-hidden">{c}</span>
                        </th>
                    ))}
                </tr>
            </thead>
            <tbody>
                <tr className="h-[26px] text-[13px] leading-none whitespace-nowrap">
                    <RowHead n={1} />
                    <td colSpan={7} className="bg-[#9bc2e6] pl-1! text-[17px] leading-none font-bold">カテゴリ別売上実績レポート</td>
                    <td className="bg-[#9bc2e6] pl-[2px]!">カテゴリ：</td>
                    <td colSpan={3} className="bg-[#9bc2e6] pl-[2px]!">OA機器・家電・オフィス家具</td>
                    <td className="bg-[#9bc2e6] pl-[2px]! [font-feature-settings:normal]">出力日時：</td>
                    <td colSpan={3} className="bg-[#9bc2e6] pl-[2px]! text-[14px] leading-none">2020年04年24月 11:30:05</td>
                </tr>
                <EmptyRows from={2} to={3} />
                <tr className="h-[19px] text-[13px] leading-none font-bold whitespace-nowrap">
                    <RowHead n={4} />
                    <td colSpan={6} className="pl-1! text-xs leading-none">■エリア別売上比率</td>
                    <td colSpan={9} className="pl-1!">■商品別売上推移</td>
                </tr>
                <EmptyRows from={5} to={24} />
                <tr className="h-[19px] text-[13px] leading-none font-bold whitespace-nowrap">
                    <RowHead n={25} />
                    <td colSpan={8} className="pl-1!">■商品別販売実績明細</td>
                </tr>
                <tr className="h-4">
                    <RowHead n={26} />
                    <td />
                    <td colSpan={13} className="border-b border-black" />
                </tr>
                <tr className="h-[19px] text-[14px] leading-none">
                    <RowHead n={27} />
                    <td className="border-r border-black" />
                    <td className="border-r border-b border-black bg-[#9bc2e6]" />
                    {MONTHS.map((m) => (
                        <td key={m} className="border-r border-b border-black bg-[#9bc2e6] pl-[2px]!">{m}</td>
                    ))}
                </tr>
                {PRODUCTS.map(([name, ...values], i) => (
                    <tr key={name} className="h-[19px] text-[14px] leading-none whitespace-nowrap">
                        <RowHead n={28 + i} />
                        <td className="border-r border-black" />
                        <td className="border-r border-b border-black pl-[2px]! text-xs leading-none">{name}</td>
                        {values.map((v, j) => (
                            <td key={j} className="border-r border-b border-black pr-[2px]! text-right">{v}</td>
                        ))}
                    </tr>
                ))}
            </tbody>
        </table>
        <PieChart />
        <LineChart />
    </div>
);

const VerticalScroll = () => (
    <div className="w-4 shrink-0 flex flex-col items-center bg-[#dfe2e8]">
        <span className="w-full h-[5px] border-b border-[#868b94] bg-white" />
        <span className="h-4 flex items-center"><ScrollArrow className="rotate-180" /></span>
        <div className="w-full flex-1 flex flex-col">
            <div className="grow-[549] w-[15px] border border-[#868b94] rounded-[1px] bg-gradient-to-r from-[#f6f7f9] to-[#d8dce2] flex flex-col items-center justify-center gap-px">
                {[0, 1, 2, 3].map((i) => <span key={i} className="w-2 h-px bg-[#7c828c]" />)}
            </div>
            <div className="grow-[76]" />
        </div>
        <span className="h-[18px] flex items-center"><ScrollArrow /></span>
    </div>
);

/* ---------- bottom bars ---------- */

const NAV_PATHS = ["M1 1h1.500v7H1zM8 1v7L3.500 4.500z", "M6.500 1v7L2 4.500z", "M2.500 1v7L7 4.500z", "M6.500 1H8v7H6.500zM1 1v7l4.500-3.500z"];
const NAV_LABELS = ["先頭のシート", "前のシート", "次のシート", "最後のシート"];

// slanted right edge, drawn over the start of the next tab
const TabEdge = ({ fill }) => (
    <svg width="12" height="15" className="absolute -right-[8px] top-0 z-10" aria-hidden="true">
        <path d="M0 0h12L0 15z" fill={fill} />
        <path d="M0.5 14.5L11.5 0.5" stroke="#a3a8b0" />
    </svg>
);

const SheetTab = ({ name, active }) => (
    <button
        type="button"
        className={clsx("relative shrink-0 flex items-center whitespace-nowrap px-2 text-[13px] leading-none", active ? "bg-white text-[#222]" : "bg-[#e6e8ed] text-[#444]")}
    >
        <TabEdge fill={active ? "#fff" : "#e6e8ed"} />
        <span className="relative z-20">{name}</span>
    </button>
);

const TabBar = () => (
    <div className="h-4 shrink-0 flex bg-[#dce0e8]">
        <div className="flex flex-1 min-w-0 border-t border-[#a3a8b0] font-['Liberation_Sans','Noto_Sans_CJK_JP',sans-serif]">
            <div className="w-[63px] flex items-center justify-around pl-px pr-px border-r border-[#a3a8b0]">
                {NAV_PATHS.map((d, i) => (
                    <IconButton key={d} label={NAV_LABELS[i]}><svg width="9" height="9"><path d={d} fill="#444" /></svg></IconButton>
                ))}
            </div>
            <SheetTab name="Sheet1" />
            <SheetTab name="Sheet2" />
            <SheetTab name="Sheet3" />
            <SheetTab name="カテゴリ別売上実績レポート" active />
            <IconButton label="ワークシートの挿入" className="relative w-[32px] pl-1 bg-[#e6e8ed]">
                <svg width="15" height="13" viewBox="0 0 15 13">
                    <path d="M4 3h9v7l-2 2H4z" fill="#dce9f8" stroke="#5f83b5" />
                    <path d="M6 12h5l2-2" stroke="#2c4f87" fill="none" />
                    <path d="M3.5 0v7M0 3.5h7M1 1l5 5M6 1L1 6" stroke="#f0a32e" />
                    <circle cx="3.5" cy="3.5" r="1.3" fill="#fff3c4" />
                </svg>
                <TabEdge fill="#e6e8ed" />
            </IconButton>
        </div>
        <div className="w-[650px] shrink-0 flex items-center">
            <span className="w-[8px] h-full border-2 border-[#9a9ca3] bg-white flex justify-center"><span className="w-px my-[3px] bg-[#555]" /></span>
            <span className="w-[17px] flex justify-center"><ScrollArrow className="rotate-90" /></span>
            <div className="w-[558px] h-full border border-[#868b94] rounded-[2px] bg-gradient-to-b from-[#f6f7f9] to-[#d8dce2] flex items-center justify-center gap-px">
                {[0, 1, 2, 3].map((i) => <span key={i} className="h-2 w-px bg-[#7c828c]" />)}
            </div>
            <span className="flex-1" />
            <span className="w-[18px] flex justify-center"><ScrollArrow className="-rotate-90" /></span>
            <span className="w-[8px] h-full mr-4 border-2 border-[#9a9ca3] bg-white flex justify-center"><span className="w-px my-[3px] bg-[#555]" /></span>
        </div>
    </div>
);

const StatusBar = () => (
    <footer className="h-[22px] shrink-0 flex items-center border-t border-[#868b94] bg-gradient-to-b from-[#e4e6ea] via-[#d0d3d8] to-[#bbbfc5] text-[#444]">
        <span className="pl-2 w-[51px] text-[11px]">コマンド</span>
        <span className="w-px h-full bg-[#8f949c]" />
        <IconButton label="マクロの記録" className="w-[34px]">
            <svg width="16" height="14" viewBox="0 0 16 14">
                <rect x="1.5" y="1.5" width="14" height="12" fill="#fff" stroke="#3f66a8" />
                <rect x="2" y="2" width="13" height="2.5" fill="#4a74bd" />
                <path d="M3 6.5h11M3 8.5h11M3 10.5h11M6.5 5v8M10.5 5v8" stroke="#8fa9d4" />
                <circle cx="3" cy="3" r="2.8" fill="#d3493a" />
            </svg>
        </IconButton>
        <span className="w-px h-full bg-[#8f949c]" />
        <span className="flex-1" />
        <span className="w-px h-full bg-[#8f949c] mr-1" />
        <IconButton label="標準" className="size-[19px] rounded-[2px] border border-[#c98f27] bg-gradient-to-b from-[#fbd36b] to-[#fff28e]">
            <svg width="13" height="10" fill="#fff" stroke="#666"><path d="M0.5 0.5h12v9h-12zM0.5 3.5h12M0.5 6.5h12M4.5 0.5v9M8.5 0.5v9" /></svg>
        </IconButton>
        <IconButton label="ページ レイアウト" className="ml-[2px]">
            <svg width="14" height="12" stroke="#666"><rect x="0.5" y="0.5" width="13" height="11" fill="#a9acb1" /><rect x="3.5" y="1.5" width="7" height="9" fill="#fff" /><path d="M5 4.5h4M5 6.5h4M5 8.5h4" /></svg>
        </IconButton>
        <IconButton label="改ページ プレビュー" className="ml-[5px]">
            <svg width="14" height="12" stroke="#666"><rect x="0.5" y="0.5" width="13" height="11" fill="#a9acb1" /><path d="M1 1h3v6H1zM5 1h4v6H5z" fill="#fff" /></svg>
        </IconButton>
        <button type="button" className="ml-3 text-[13px]">100%</button>
        <IconButton label="縮小" className="ml-2 size-4 rounded-full border border-[#6d7178] bg-[#f2f3f5]"><span className="w-2 h-[2px] bg-[#555]" /></IconButton>
        <input
            type="range"
            aria-label="ズーム"
            defaultValue="50"
            className="w-[100px] h-3 appearance-none bg-[linear-gradient(#8a93a3,#8a93a3)] bg-[length:100%_1px] bg-center bg-no-repeat [&::-webkit-slider-thumb]:appearance-none [&::-webkit-slider-thumb]:w-[9px] [&::-webkit-slider-thumb]:h-3 [&::-webkit-slider-thumb]:rounded-b-[4px] [&::-webkit-slider-thumb]:border [&::-webkit-slider-thumb]:border-[#6d7178] [&::-webkit-slider-thumb]:bg-[#f4f5f7]"
        />
        <IconButton label="拡大" className="mr-1 size-4 rounded-full border border-[#6d7178] bg-[#f2f3f5]">
            <svg width="8" height="8"><path d="M0 4h8M4 0v8" stroke="#555" strokeWidth="2" /></svg>
        </IconButton>
    </footer>
);

export default function App() {
    return (
        <div className="h-screen flex flex-col overflow-hidden bg-white text-xs font-['Noto_Sans','Noto_Sans_CJK_JP',sans-serif] [font-feature-settings:'palt']">
            <Header />
            <Ribbon />
            <FormulaBar />
            <main className="flex-1 min-h-0 flex">
                <Sheet />
                <VerticalScroll />
            </main>
            <TabBar />
            <StatusBar />
        </div>
    );
}
